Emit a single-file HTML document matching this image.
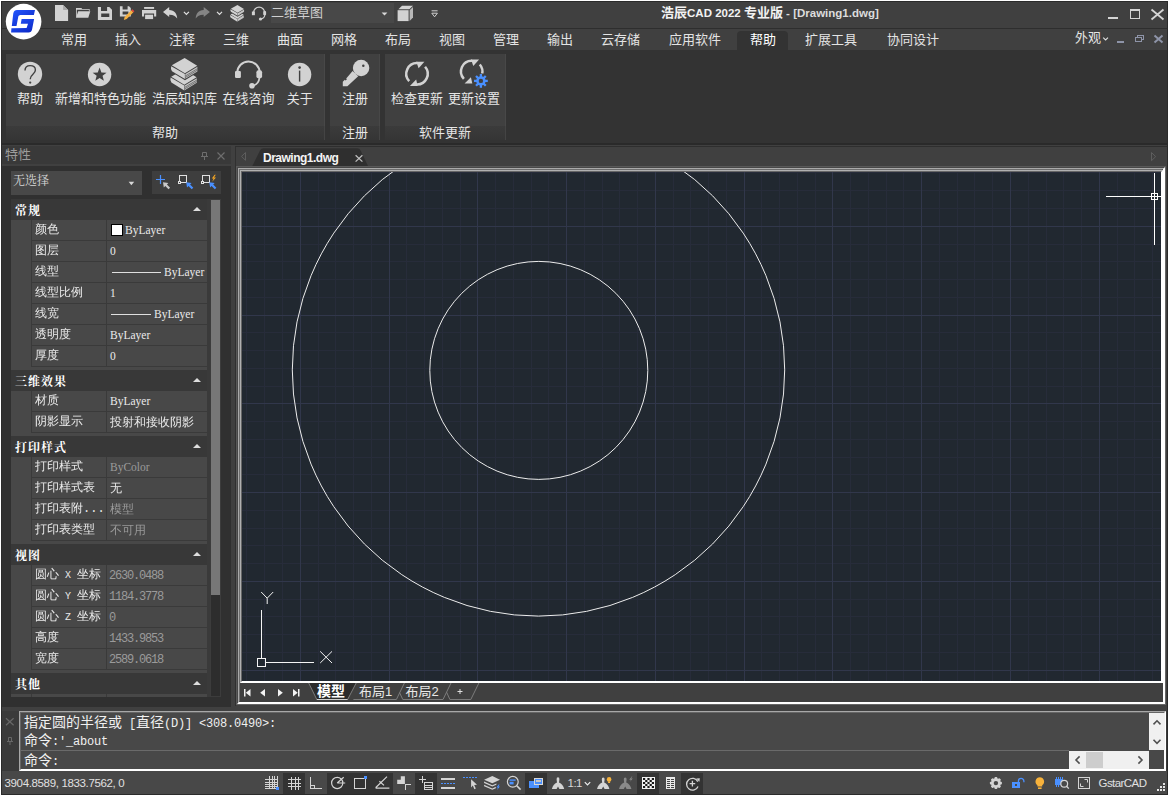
<!DOCTYPE html>
<html lang="zh-CN">
<head>
<meta charset="utf-8">
<title>浩辰CAD 2022 专业版 - [Drawing1.dwg]</title>
<style>
html,body{margin:0;padding:0;background:#fff;}
body{width:1169px;height:796px;overflow:hidden;position:relative;font-family:"Liberation Sans","Noto Sans CJK SC",sans-serif;color:#e6e6e6;font-size:13px;line-height:1;}
div,span,svg{position:absolute;box-sizing:border-box;}
svg{overflow:visible}
.t{white-space:nowrap;}
#win{left:1px;top:1px;width:1167px;height:794px;background:#404040;border:1px solid #2b2b2b;}
/* menu tabs */
.mt{top:30px;height:20px;line-height:20px;font-size:13px;color:#e4e4e4;text-align:center;white-space:nowrap;}
/* ribbon */
.rp{top:54px;height:72px;background:#404040;border-right:1px solid #484848}
.rl{top:126px;height:14px;background:linear-gradient(#3b3b3b,#353535);border-right:1px solid #444}
.rt{font-size:13px;color:#e6e6e6;white-space:nowrap;text-align:center;height:14px;line-height:14px;}
/* property grid */
.pf{font-family:"Liberation Serif","Noto Serif CJK SC",serif;}
.sh{left:11px;width:196px;height:21px;background:#383838;}
.sh b{position:absolute;left:4px;top:4px;letter-spacing:1px;font-size:12px;line-height:13px;color:#fff;font-weight:bold;white-space:nowrap;font-family:"Noto Serif CJK SC",serif;}
.sh i{position:absolute;left:182px;top:8px;width:0;height:0;border-left:4px solid transparent;border-right:4px solid transparent;border-bottom:4px solid #ddd;}
.rw{left:11px;width:196px;height:21px;background:#484848;border-bottom:1px solid #3a3a3a;}
.rw u{position:absolute;left:20px;top:0;width:1px;height:20px;background:#3a3a3a;}
.rw s{position:absolute;left:95px;top:0;width:1px;height:20px;background:#3a3a3a;}
.rw em{position:absolute;left:24px;top:3px;font-style:normal;font-size:12px;line-height:14px;color:#eaeaea;white-space:pre;font-family:"Liberation Mono","WenQuanYi Zen Hei",monospace;letter-spacing:0;}
.rw em b{font-weight:normal;font-size:10px;}
.rw kbd{position:absolute;left:0;top:0;width:20px;height:21px;background:#484848;}
.rw q{position:absolute;left:99px;top:3px;font-size:11.500px;line-height:14px;color:#eaeaea;white-space:nowrap;quotes:none;font-family:"Liberation Serif","WenQuanYi Zen Hei",serif;}
.rw q.g{color:#9a9a9a}
.rw q.c{font-size:12px}
.rw q.m{font-family:"Liberation Mono",monospace;font-size:12px;letter-spacing:-1.2px;color:#9a9a9a;top:4px;left:98px}
.gap{left:11px;width:196px;height:3px;background:#484848;}
.cmd{left:24px;font-family:"Liberation Mono","Noto Sans CJK SC",monospace;font-size:12px;letter-spacing:-0.2px;color:#f0f0f0;white-space:pre;line-height:18px;height:18px;}
.cmd span{position:static;font-size:14px;letter-spacing:0;font-family:"Noto Sans CJK SC",sans-serif;}
.sb{top:773px;height:21px;background:#333;}
</style>
</head>
<body>
<div id="win"></div>
<!-- title bar -->
<div style="left:2px;top:28px;width:1165px;height:1px;background:#2e2e2e"></div>
<div style="left:2px;top:50px;width:1165px;height:93px;background:#333"></div>
<div style="left:2px;top:143px;width:1165px;height:2px;background:#2a2a2a"></div>
<!-- logo -->
<svg style="left:0;top:0" width="48" height="44" viewBox="0 0 48 44">
<defs><linearGradient id="lg" x1="0" y1="0" x2="1" y2="1"><stop offset="0" stop-color="#2458ff"/><stop offset="1" stop-color="#0a24c0"/></linearGradient></defs>
<circle cx="23.6" cy="21.6" r="17.8" fill="#fff"/>
<path d="M13.3 13.3Q14.2 10.1 17 10.1L35 10.1L33.9 14.9L20.4 14.9Q18.6 14.9 18.3 16.6L16.5 25.9L11.8 25.9Z" fill="url(#lg)"/>
<path d="M21.6 19.1L34.1 19.1L32.1 29.3Q31.4 32.6 28.5 32.6L11.1 32.6L11.4 28.2L26.6 27.9L28 23.8L20.8 23.8Z" fill="url(#lg)"/>
</svg>
<!-- quick access icons -->
<svg style="left:0;top:0" width="450" height="28" viewBox="0 0 450 28">
<g fill="#d2d2d2">
<path d="M55 5.1H63.1L68.1 10.1V20.9H55Z"/><path d="M63.1 5.1L68.1 10.1H63.1Z" fill="#a8a8a8"/>
<path d="M76 8H81.4L82.2 9H89.6V11H88.9V9.8H76.8V16.5L76 17.8Z"/><path d="M78.2 11.2H90.3L88.3 17.8H76Z"/>
<path d="M97.9 7H101V11.1H107.1V7H109.3L112 9.7V20.1H97.9ZM101.2 13.5V17H109.3V13.5Z" fill-rule="evenodd"/>
<path d="M119.9 6.2H122.6V9.6H127.6V6.2H129L130.8 8V16.6H119.9ZM122.6 11.6V14.6H128.4V11.6Z" fill-rule="evenodd"/>
<path d="M144.1 7H154.1V8.9H144.1Z"/><path d="M142 10.1H156.2V16.6H154.1V13.6H144.1V16.6H142Z"/><path d="M145.1 14.7H153.1V19.1H145.1Z"/>
<path d="M163 12L169.2 7V9.9C174.5 10.2 177 13.5 177.2 18.6C175.5 15.8 173.2 14.6 169.2 14.7V17Z"/>
<path d="M209.9 12L203.7 7V9.9C198.4 10.2 195.9 13.5 195.7 18.6C197.4 15.8 199.7 14.6 203.7 14.7V17Z" fill="#858585"/>
</g>
<path d="M123.9 19.9L124.6 17L131.3 10.2L133.4 12.2L126.7 19Z" fill="#f5b042"/><path d="M131.3 10.2L132.3 9.2L134.4 11.2L133.4 12.2Z" fill="#e8453c"/>
<path d="M183.9 11.8L186.4 14.4L188.9 11.8" fill="none" stroke="#e0e0e0" stroke-width="1.2"/>
<path d="M217 11.8L219.5 14.4L222 11.8" fill="none" stroke="#e0e0e0" stroke-width="1.2"/>
<!-- books small -->
<g fill="#d2d2d2" transform="translate(142 -25.100) scale(.517)">
<g transform="translate(-.6 11.400)">
<path d="M171.800 65.300L184.600 58L197.200 65.800L184.900 73.300Z"/>
<path d="M171.200 66.200L184.900 74.100V79.100L172 71.200Q170.400 68.600 171.200 66.200Z"/>
<path d="M185.300 74.100L197.400 66.800V71.400L185.300 78.800Z" fill="#c4c4c4"/>
</g>
<path d="M170.400 65.300L184.600 56.600L198.800 65.800V72.400L185 80.800L170.600 72.200Z" fill="#404040"/>
<path d="M171.800 65.300L184.600 58L197.200 65.800L184.900 73.300Z"/>
<path d="M171.200 66.200L184.900 74.100V79.100L172 71.200Q170.400 68.600 171.200 66.200Z"/>
<path d="M185.300 74.100L197.400 66.800V71.400L185.300 78.800Z" fill="#c4c4c4"/>
</g>
<!-- headset small -->
<path d="M253.6 12.6A5.4 5.4 0 0 1 264.6 12.6" fill="none" stroke="#d2d2d2" stroke-width="1.2"/>
<rect x="251.9" y="11.5" width="3" height="3.7" fill="#d2d2d2"/><rect x="263.2" y="11" width="2.9" height="4.2" rx="1" fill="#d2d2d2"/>
<path d="M264.8 15C264.6 17.2 263 18.6 260.8 19" fill="none" stroke="#d2d2d2" stroke-width="1.1"/><circle cx="260.5" cy="19" r="1.6" fill="#d2d2d2"/>
<!-- combo -->
<rect x="271" y="3" width="123" height="20" fill="#484848"/>
<path d="M381.6 12.4H387.4L384.5 15.6Z" fill="#d8d8d8"/>
<!-- cube -->
<g fill="#d2d2d2"><path d="M397.6 10.2H408.6V21.1H397.6Z"/><path d="M398.4 9.2L402 5.8H413L409.4 9.2Z"/><path d="M409.6 10.2L413 7V17.6L409.6 21.1Z" fill="#b8b8b8"/></g>
<path d="M431.6 10.8H437.6" stroke="#cfcfcf" stroke-width="1"/><path d="M431.8 13.2L434.6 16.8L437.4 13.2Z" fill="none" stroke="#cfcfcf" stroke-width="1"/>
</svg>
<span class="t" style="left:271px;top:6px;font-size:13px;line-height:14px;color:#d0d0d0">二维草图</span>
<!-- title -->
<span class="t" id="title" style="left:661px;top:5px;font-size:13px;line-height:16px;font-weight:bold;color:#f2f2f2">浩辰<span style="position:static;font-size:11.500px;letter-spacing:0">CAD 2022 </span>专业版<span style="position:static;font-size:11.500px;letter-spacing:0;font-weight:bold;color:#dcdcdc"> - [Drawing1.dwg]</span></span>
<!-- window buttons -->
<svg style="left:1100px;top:0" width="69" height="52" viewBox="1100 0 69 52">
<rect x="1108" y="17" width="10" height="2" fill="#d4d4d4"/>
<rect x="1130.5" y="10" width="9" height="8.5" fill="none" stroke="#d4d4d4" stroke-width="1"/><rect x="1130" y="9" width="10" height="2" fill="#d4d4d4"/>
<path d="M1151.500 9.500L1163.500 19.500M1163.500 9.500L1151.500 19.500" stroke="#d4d4d4" stroke-width="1.800"/>
<path d="M1103.2 37.6L1105.6 40L1108 37.6" fill="none" stroke="#e0e0e0" stroke-width="1.1"/>
<rect x="1117" y="41" width="7" height="2" fill="#8e94a8"/>
<rect x="1137.5" y="35.5" width="6" height="4" fill="none" stroke="#8e94a8" stroke-width="1"/><rect x="1135.5" y="37.5" width="6" height="4" fill="#404040" stroke="#8e94a8" stroke-width="1"/>
<path d="M1154.5 35.5L1162.5 42.5M1162.5 35.5L1154.5 42.5" stroke="#8e94a8" stroke-width="2"/>
</svg>
<span class="t" style="left:1075px;top:31px;font-size:13px;line-height:14px;color:#e4e4e4">外观</span>
<!-- menu tabs -->
<div style="left:737px;top:31px;width:51px;height:20px;background:#333;border-radius:4px 4px 0 0"></div>
<span class="mt" style="left:47px;width:54px">常用</span>
<span class="mt" style="left:101px;width:54px">插入</span>
<span class="mt" style="left:155px;width:54px">注释</span>
<span class="mt" style="left:209px;width:54px">三维</span>
<span class="mt" style="left:263px;width:54px">曲面</span>
<span class="mt" style="left:317px;width:54px">网格</span>
<span class="mt" style="left:371px;width:54px">布局</span>
<span class="mt" style="left:425px;width:54px">视图</span>
<span class="mt" style="left:479px;width:54px">管理</span>
<span class="mt" style="left:533px;width:54px">输出</span>
<span class="mt" style="left:587px;width:67px">云存储</span>
<span class="mt" style="left:654px;width:82px">应用软件</span>
<span class="mt" style="left:736px;width:54px;color:#fff">帮助</span>
<span class="mt" style="left:790px;width:82px">扩展工具</span>
<span class="mt" style="left:872px;width:82px">协同设计</span>
<!-- ribbon panels -->
<div class="rp" style="left:6px;width:319px"></div><div class="rl" style="left:6px;width:319px"></div>
<div class="rp" style="left:330px;width:50px"></div><div class="rl" style="left:330px;width:50px"></div>
<div class="rp" style="left:385px;width:121px"></div><div class="rl" style="left:385px;width:121px"></div>
<svg style="left:0;top:50px" width="520" height="50" viewBox="0 50 520 50">
<g fill="#d2d2d2">
<circle cx="30" cy="74" r="12.2"/>
<circle cx="99.6" cy="74.5" r="11.7"/>
<circle cx="299.6" cy="74.5" r="11.7"/>
<!-- books -->
<g id="bk" transform="translate(-.6 11.400)">
<path d="M171.800 65.300L184.600 58L197.200 65.800L184.900 73.300Z"/>
<path d="M171.200 66.200L184.900 74.100V79.100L172 71.200Q170.400 68.600 171.200 66.200Z"/>
<path d="M185.300 74.100L197.400 66.800V71.400L185.300 78.800Z" fill="#c4c4c4"/>
</g>
<path d="M170.800 65.300L184.600 57L198.400 65.800V72L185 80.200L171 71.800Z" fill="#404040"/>
<path d="M171.800 65.300L184.600 58L197.200 65.800L184.900 73.300Z"/>
<path d="M171.200 66.200L184.900 74.100V79.100L172 71.200Q170.400 68.600 171.200 66.200Z"/>
<path d="M185.300 74.100L197.400 66.800V71.400L185.300 78.800Z" fill="#c4c4c4"/>
<!-- headset -->
<rect x="235" y="70.9" width="5.9" height="7.1" rx="1.2"/><rect x="256.4" y="70.2" width="5.7" height="8.1" rx="2"/>
<circle cx="252" cy="85.8" r="2.8"/>
<!-- key -->
<circle cx="361.100" cy="68" r="8.200"/>
<path d="M352.600 71L358.200 76.200L347.400 86.200H342.800V81.800L344.800 79.800L345.600 80.600L346.900 79.300L346.200 78.500Z"/>
</g>
<path d="M237.300 72.600A11.200 11.200 0 0 1 259.700 72.600" fill="none" stroke="#d2d2d2" stroke-width="2"/>
<path d="M259.400 78C259 81.600 257 84.400 253.400 85.600" fill="none" stroke="#d2d2d2" stroke-width="1.800"/>
<circle cx="363.300" cy="65.800" r="1.250" fill="#404040"/>
<path d="M185.300 76L197.400 68.700M185.300 77.500L197.400 70.200M184.700 87.400L196.800 80.100M184.700 88.900L196.800 81.600" stroke="#404040" stroke-width=".6" fill="none"/>
<!-- ? -->
<path d="M25 70.600C25 67.200 27.200 65.600 30.200 65.600C33.400 65.600 35.400 67.400 35.400 70C35.400 74.400 30.200 74 30.200 79.200" fill="none" stroke="#404040" stroke-width="1.400"/><circle cx="30.200" cy="82.600" r="1.150" fill="#404040"/>
<!-- star -->
<path d="M99.60 67.60L101.42 72.39L106.54 72.64L102.55 75.86L103.89 80.81L99.60 78.00L95.31 80.81L96.65 75.86L92.66 72.64L97.78 72.39Z" fill="#404040"/>
<!-- i -->
<circle cx="299.6" cy="67.6" r="1.3" fill="#404040"/><rect x="298.9" y="70.6" width="1.4" height="11" fill="#404040"/>
<!-- refresh 1 -->
<g fill="none" stroke="#d2d2d2" stroke-width="2.500">
<path d="M409.17 81.10A10.7 10.7 0 0 1 417.37 63.11"/><path d="M425.08 66.78A10.7 10.7 0 0 1 416.63 84.49"/>
<path d="M463.87 78.80A10.7 10.7 0 0 1 472.07 60.81"/><path d="M479.78 64.48A10.7 10.7 0 0 1 481.88 74.81"/>
</g>
<g fill="#d2d2d2"><path d="M416.30 61.80L424.40 61.80L418.60 68.30Z"/><path d="M409.90 85.90L417.60 85.90L416.20 79.50Z"/><path d="M471.00 59.50L479.10 59.50L473.30 66.00Z"/><path d="M464.60 83.60L472.30 83.60L470.90 77.20Z"/></g>
<!-- gear -->
<circle cx="480.900" cy="80.900" r="7.600" fill="#404040"/>
<g transform="translate(480.900 80.900)" fill="#4a90ff"><circle r="4.700"/>
<rect x="-1.150" y="-6.900" width="2.300" height="13.800" transform="rotate(0)"/><rect x="-1.150" y="-6.900" width="2.300" height="13.800" transform="rotate(45)"/><rect x="-1.150" y="-6.900" width="2.300" height="13.800" transform="rotate(90)"/><rect x="-1.150" y="-6.900" width="2.300" height="13.800" transform="rotate(135)"/>
<circle r="2.200" fill="#404040"/></g>
</svg>
<span class="rt" style="left:0;width:60px;top:92px">帮助</span>
<span class="rt" style="left:50.5px;width:100px;top:92px">新增和特色功能</span>
<span class="rt" style="left:134.4px;width:100px;top:92px">浩辰知识库</span>
<span class="rt" style="left:198.5px;width:100px;top:92px">在线咨询</span>
<span class="rt" style="left:269.7px;width:60px;top:92px">关于</span>
<span class="rt" style="left:325px;width:60px;top:92px">注册</span>
<span class="rt" style="left:367px;width:100px;top:92px">检查更新</span>
<span class="rt" style="left:424px;width:100px;top:92px">更新设置</span>
<span class="rt" style="left:135px;width:60px;top:126px">帮助</span>
<span class="rt" style="left:325px;width:60px;top:126px">注册</span>
<span class="rt" style="left:395px;width:100px;top:126px">软件更新</span>
<!-- left properties panel -->
<div style="left:2px;top:166px;width:229px;height:541px;background:#303030"></div>
<div style="left:2px;top:146px;width:229px;height:18px;background:#393939"></div>
<div style="left:235px;top:146px;width:1px;height:560px;background:#303030"></div>
<div style="left:235px;top:146px;width:932px;height:1px;background:#2e2e2e"></div>
<span class="t" style="left:5px;top:148px;font-size:13px;line-height:14px;color:#9c9c9c">特性</span>
<svg style="left:195px;top:148px" width="36" height="16" viewBox="195 148 36 16">
<g fill="none" stroke="#6e6e6e" stroke-width="1"><path d="M202.5 152.5H206.5V156.5H202.5ZM201 156.5H208M204.5 156.5V160"/><path d="M217.5 152.5L224.5 159.5M224.5 152.5L217.5 159.5" stroke-width="1.2"/></g>
</svg>
<div style="left:11px;top:171px;width:131px;height:24px;background:#484848"></div>
<span class="t pf" style="left:13px;top:173px;font-size:12px;line-height:14px;color:#d8d8d8;font-family:'Noto Serif CJK SC',serif">无选择</span>
<svg style="left:126px;top:178px" width="12" height="10" viewBox="126 178 12 10"><path d="M128.6 181.8H134.2L131.4 185.2Z" fill="#d8d8d8"/></svg>
<div style="left:152px;top:171px;width:69px;height:23px;background:#3e3e3e"></div>
<svg style="left:152px;top:171px" width="69" height="23" viewBox="152 171 69 23">
<path d="M156 179.500H165M160.500 175V184" stroke="#4a90ff" stroke-width="1.200" fill="none"/>
<path d="M163.0 182.2L168.4 183.0L166.9 184.5L170.1 187.7L168.5 189.3L165.3 186.1L163.8 187.6Z" fill="#c8c8c8"/>
<g fill="none" stroke="#e0e0e0" stroke-width="1"><rect x="179.500" y="175.500" width="7" height="7"/><rect x="202.500" y="175.500" width="7" height="7"/></g>
<g fill="#3e3e3e" stroke="#e0e0e0" stroke-width="1"><rect x="178.500" y="181.500" width="2" height="2"/><rect x="201.500" y="181.500" width="2" height="2"/></g>
<path d="M186.2 182.2L191.6 183.0L190.1 184.5L193.3 187.7L191.7 189.3L188.5 186.1L187.0 187.6Z" fill="#4a90ff"/><path d="M209.3 182.2L214.7 183.0L213.2 184.5L216.4 187.7L214.8 189.3L211.6 186.1L210.1 187.6Z" fill="#4a90ff"/>
<path d="M214.600 174.800L211.800 178.600H213.600L212.200 181.800L216 177.400H214L215.800 174.800Z" fill="#f5a623"/>
</svg>
<!-- grid scrollbar -->
<div style="left:207px;top:199px;width:3px;height:498px;background:#3a3a3a"></div>
<div style="left:210px;top:199px;width:11px;height:498px;background:#2d2d2d;border:1px solid #3c3c3c"></div>
<div style="left:211px;top:200px;width:9px;height:395px;background:#777"></div>
<div class="sh" style="top:199px"><b>常规</b><i></i></div>
<div class="rw" style="top:220px"><kbd></kbd><u></u><s></s><em>颜色</em><span style="left:100px;top:4px;width:12px;height:12px;background:#fff;border:1px solid #000"></span><q><span style="position:static;display:inline-block;width:15px"></span>ByLayer</q></div>
<div class="rw" style="top:241px"><kbd></kbd><u></u><s></s><em>图层</em><q>0</q></div>
<div class="rw" style="top:262px"><kbd></kbd><u></u><s></s><em>线型</em><span style="left:101px;top:10px;width:49px;height:1px;background:#e0e0e0"></span><q><span style="position:static;display:inline-block;width:54px"></span>ByLayer</q></div>
<div class="rw" style="top:283px"><kbd></kbd><u></u><s></s><em>线型比例</em><q>1</q></div>
<div class="rw" style="top:304px"><kbd></kbd><u></u><s></s><em>线宽</em><span style="left:100px;top:10px;width:40px;height:1px;background:#e0e0e0"></span><q><span style="position:static;display:inline-block;width:44px"></span>ByLayer</q></div>
<div class="rw" style="top:325px"><kbd></kbd><u></u><s></s><em>透明度</em><q>ByLayer</q></div>
<div class="rw" style="top:346px"><kbd></kbd><u></u><s></s><em>厚度</em><q>0</q></div>
<div class="gap" style="top:367px"></div>
<div class="sh" style="top:370px"><b>三维效果</b><i></i></div>
<div class="rw" style="top:391px"><kbd></kbd><u></u><s></s><em>材质</em><q>ByLayer</q></div>
<div class="rw" style="top:412px"><kbd></kbd><u></u><s></s><em>阴影显示</em><q class="c">投射和接收阴影</q></div>
<div class="gap" style="top:433px"></div>
<div class="sh" style="top:436px"><b>打印样式</b><i></i></div>
<div class="rw" style="top:457px"><kbd></kbd><u></u><s></s><em>打印样式</em><q class="g">ByColor</q></div>
<div class="rw" style="top:478px"><kbd></kbd><u></u><s></s><em>打印样式表</em><q class="c">无</q></div>
<div class="rw" style="top:499px"><kbd></kbd><u></u><s></s><em>打印表附...</em><q class="g c">模型</q></div>
<div class="rw" style="top:520px"><kbd></kbd><u></u><s></s><em>打印表类型</em><q class="g c">不可用</q></div>
<div class="gap" style="top:541px"></div>
<div class="sh" style="top:544px"><b>视图</b><i></i></div>
<div class="rw" style="top:565px"><kbd></kbd><u></u><s></s><em>圆心<b> X </b>坐标</em><q class="m">2630.0488</q></div>
<div class="rw" style="top:586px"><kbd></kbd><u></u><s></s><em>圆心<b> Y </b>坐标</em><q class="m">1184.3778</q></div>
<div class="rw" style="top:607px"><kbd></kbd><u></u><s></s><em>圆心<b> Z </b>坐标</em><q class="m">0</q></div>
<div class="rw" style="top:628px"><kbd></kbd><u></u><s></s><em>高度</em><q class="m">1433.9853</q></div>
<div class="rw" style="top:649px"><kbd></kbd><u></u><s></s><em>宽度</em><q class="m">2589.0618</q></div>
<div class="gap" style="top:670px"></div>
<div class="sh" style="top:673px"><b>其他</b><i></i></div>
<div class="rw" style="top:694px;height:3px;border:0"><u style="height:3px"></u><s style="height:3px"></s></div>
<!-- document area -->

<svg style="left:236px;top:146px" width="931" height="20" viewBox="236 146 931 20">
<path d="M252.300 166L260 150.500Q261 148.300 263.500 148.300H357.200Q359.600 148.300 360.600 150.500L368 166Z" fill="#2f2f2f"/>
<path d="M245.500 152.500L241.500 156.400L245.500 160.300Z" fill="none" stroke="#5e5e5e" stroke-width="1"/>
<path d="M1151.500 152.500L1155.700 156.600L1151.500 160.700Z" fill="none" stroke="#5e5e5e" stroke-width="1"/>
<path d="M355.600 155.200L362.400 161.600M362.400 155.200L355.600 161.600" stroke="#bdbdbd" stroke-width="1.300" fill="none"/>
</svg>
<span class="t" style="left:263px;top:151px;font-size:12px;line-height:14px;font-weight:bold;letter-spacing:-0.5px;color:#f4f4f4">Drawing1.dwg</span>
<div style="left:236px;top:166px;width:930px;height:539px;border-style:solid;border-width:1px;border-color:#595959 #666 #666 #595959;"></div>
<div style="left:237px;top:167px;width:928px;height:537px;border-style:solid;border-width:1px;border-color:#484848 #fff #fff #484848;"></div>
<div style="left:238px;top:168px;width:926px;height:535px;border-style:solid;border-width:1px;border-color:#aaa #fff #fff #aaa;background:#404040;"></div>
<div style="left:239px;top:169px;width:924px;height:533px;border-style:solid;border-width:1px;border-color:#6e6e6e transparent transparent #6e6e6e;"></div>
<div style="left:240px;top:170px;width:923px;height:513px;border-style:solid;border-width:1px;border-color:#b0b0b0 #fff #fff #b0b0b0;"></div>
<div style="left:241px;top:171px;width:921px;height:511px;border-style:solid;border-width:1px;border-color:#666 #fff #fff #666;"></div>
<svg style="left:242px;top:172px;overflow:hidden" width="919" height="509" viewBox="242 172 919 509">
<rect x="242" y="172" width="919" height="509" fill="#212830"/>
<path d="M246.5 172V681M264.5 172V681M282.5 172V681M318.5 172V681M335.5 172V681M353.5 172V681M371.5 172V681M406.5 172V681M424.5 172V681M442.5 172V681M460.5 172V681M495.5 172V681M513.5 172V681M531.5 172V681M548.5 172V681M584.5 172V681M602.5 172V681M619.5 172V681M637.5 172V681M673.5 172V681M690.5 172V681M708.5 172V681M726.5 172V681M761.5 172V681M779.5 172V681M797.5 172V681M815.5 172V681M850.5 172V681M868.5 172V681M886.5 172V681M903.5 172V681M939.5 172V681M957.5 172V681M974.5 172V681M992.5 172V681M1028.5 172V681M1046.5 172V681M1063.5 172V681M1081.5 172V681M1117.5 172V681M1134.5 172V681M1152.5 172V681M242 172.5H1161M242 190.5H1161M242 208.5H1161M242 244.5H1161M242 261.5H1161M242 279.5H1161M242 297.5H1161M242 332.5H1161M242 350.5H1161M242 368.5H1161M242 386.5H1161M242 421.5H1161M242 439.5H1161M242 457.5H1161M242 474.5H1161M242 510.5H1161M242 528.5H1161M242 545.5H1161M242 563.5H1161M242 599.5H1161M242 616.5H1161M242 634.5H1161M242 652.5H1161" stroke="#272c3a" stroke-width="1" fill="none" shape-rendering="crispEdges"/>
<path d="M300.5 172V681M389.5 172V681M477.5 172V681M566.5 172V681M655.5 172V681M744.5 172V681M832.5 172V681M921.5 172V681M1010.5 172V681M1099.5 172V681M242 226.5H1161M242 315.5H1161M242 403.5H1161M242 492.5H1161M242 581.5H1161M242 670.5H1161" stroke="#31374b" stroke-width="1" fill="none" shape-rendering="crispEdges"/>
<circle cx="538.500" cy="369.900" r="246.200" fill="none" stroke="#ececec" stroke-width="1"/>
<circle cx="538.800" cy="370.400" r="109" fill="none" stroke="#ececec" stroke-width="1"/>
<g fill="none" stroke="#f4f4f4" stroke-width="1" shape-rendering="crispEdges"><rect x="257.500" y="658.500" width="8" height="8"/><path d="M261.500 610V658M266 662.500H314"/></g>
<g fill="none" stroke="#f4f4f4" stroke-width="1"><path d="M261.200 592L267.200 598.200L273.200 592M267.200 598.200V604"/><path d="M320.200 651.400L332 663M332 651.400L320.200 663"/></g>
<g fill="none" stroke="#fff" stroke-width="1" shape-rendering="crispEdges"><path d="M1154.500 173V245M1106 196.500H1161"/><rect x="1151.500" y="193.500" width="6" height="6" stroke="#fff"/></g>
</svg>
<svg style="left:242px;top:683px" width="921" height="19" viewBox="242 683 921 19">
<g fill="#f4f4f4"><path d="M244 689H245.500V696.500H244ZM250.500 689V696.500L245.800 692.750Z"/><path d="M265 689V696.500L260.200 692.750Z"/><path d="M278 689V696.500L282.800 692.750Z"/><path d="M293 689V696.500L297.700 692.750ZM298 689H299.500V696.500H298Z"/></g>
<path d="M308.700 683L316.800 699.500H347.600L356.200 683Z" fill="#2b2b2b"/>
<g fill="none" stroke="#7c7c7c" stroke-width="1"><path d="M353.400 699.500H396.400L404.400 683"/><path d="M399.600 692.700L402.800 699.500H443L451 683"/><path d="M446.600 692.200L449.900 699.500H470.800L478.900 683"/><path d="M308.700 683L316.800 699.500M347.600 699.500L356.200 683"/></g>
<path d="M316.800 699.500H347.600" stroke="#d0d0d0" stroke-width="1"/>
<path d="M457.500 691.500H462.500M460 689V694" stroke="#e0e0e0" stroke-width="1"/>
</svg>
<span class="t" style="left:317px;top:683px;font-size:14px;line-height:16px;font-weight:bold;color:#fff">模型</span>
<span class="t" style="left:359px;top:684px;font-size:13px;line-height:15px;color:#e8e8e8">布局1</span>
<span class="t" style="left:405.500px;top:684px;font-size:13px;line-height:15px;color:#e8e8e8">布局2</span>
<!-- command line -->
<div style="left:2px;top:711px;width:1165px;height:60px;background:#3a3a3a"></div>
<div style="left:19px;top:711px;width:1147px;height:60px;background:#484848;border:1px solid;border-color:#a8a8a8 #fff #fff #a8a8a8"></div>
<div style="left:20px;top:712px;width:1145px;height:58px;border:1px solid;border-color:#666 #fff #fff #666"></div>
<div style="left:21px;top:750px;width:1048px;height:1px;background:#6a6a6a"></div>
<div style="left:1149px;top:713px;width:16px;height:37px;background:#f0f0f0"></div>
<div style="left:1069px;top:751px;width:80px;height:18px;background:#f0f0f0"></div>
<div style="left:1086px;top:752px;width:17px;height:16px;background:#cdcdcd"></div>
<svg style="left:0;top:711px" width="1169" height="60" viewBox="0 711 1169 60">
<g fill="none" stroke="#686868" stroke-width="1.200"><path d="M6 718.200L13.600 725.200M13.600 718.200L6 725.200"/><path d="M8.500 737.500H11.500V741.500H8.500ZM7 741.500H13M10 741.500V745" stroke-width="1"/></g>
<g fill="none" stroke="#505050" stroke-width="1.600"><path d="M1153.500 724.400L1157 720.800L1160.500 724.400"/><path d="M1153.500 739.800L1157 743.400L1160.500 739.800"/><path d="M1079.600 756.400L1076 760L1079.600 763.600"/><path d="M1138.400 756.400L1142 760L1138.400 763.600"/></g>
</svg>
<span class="cmd" style="top:712px"><span>指定圆的半径或</span> [<span>直径</span>(D)] &lt;308.0490&gt;:</span>
<span class="cmd" style="top:730px"><span>命令</span>:'_about</span>
<span class="cmd" style="top:750px"><span>命令</span>:</span>
<!-- status bar -->
<div style="left:2px;top:771px;width:1165px;height:23px;background:#484848"></div>
<span class="t" style="left:4.500px;top:776px;font-size:11.500px;line-height:14px;color:#e0e0e0;letter-spacing:-0.350px">3904.8589, 1833.7562, 0</span>
<div class="sb" style="left:283px;width:22px"></div>
<div class="sb" style="left:327px;width:66px"></div>
<div class="sb" style="left:415px;width:22px"></div>
<div class="sb" style="left:525px;width:22px"></div>
<div class="sb" style="left:637px;width:22px"></div>
<div class="sb" style="left:681px;width:22px"></div>
<svg style="left:0;top:771px" width="1169" height="23" viewBox="0 771 1169 23">
<g fill="none" stroke="#d4d4d4" stroke-width="1" shape-rendering="crispEdges">
<path d="M265 779.500H278M265 782.500H278M265 784.500H278M265 786.500H278M265 788.500H278M269.500 776V789M272.500 776V789M274.500 776V789M277.500 776V789"/>
<path d="M288 779.500H301M288 783.500H301M288 786.500H301M291.500 777V790M295.500 777V790M298.500 777V790" stroke-width="1"/>
<path d="M310.500 777V789M310 788.500H322M311 785.500H314.500V788"/>
<rect x="354.500" y="778.500" width="11" height="10"/>
<path d="M405 784.500H411M405.500 784V790"/>
<path d="M419 779.500H426M422.500 776V783"/><rect x="424.500" y="782.500" width="8" height="7"/><path d="M425 785.500H432M425 787.500H432"/>
<path d="M441 779H455M441 788H455" stroke-width="2"/>
</g>
<g fill="none" stroke="#d4d4d4" stroke-width="1.200">
<circle cx="337.200" cy="783" r="5.600"/><path d="M337.200 783L343.700 777.200M337.200 783H345.200"/>
<path d="M375.600 788.200H389.400M375.600 787.800L387 776.600M379.400 781.200L384 785.400"/>
<circle cx="512.800" cy="781.800" r="5.400"/><path d="M516.800 785.800L520.600 789.600" stroke-width="1.600"/>
<path d="M697.800 781.600A5.900 5.900 0 1 0 698 786.400" stroke-width="1.300"/><path d="M689.600 783.600H695.200M692.400 780.800V786.400" stroke-width="1.300"/>
<path d="M584.800 782.200L587.500 785L590.200 782.200" stroke="#eee" stroke-width="1.200"/>
<rect x="1078.500" y="777.500" width="11" height="11" stroke-width="1"/><path d="M1084.500 779.500H1087.500V782.500M1083.500 786.500H1080.500V783.500" stroke-width="1"/>
</g>
<g fill="#d4d4d4">
<path d="M397.200 779.800H400.800V776.200H404.900V783.900H397.200Z"/>
<path d="M471.100 779.200L477 784.800L474.200 785L475.800 788.600L474.400 789.200L472.800 785.600L471.100 787.400Z"/>
<path d="M484.100 779.800L492.300 776L500 779.800L492.300 783.300Z"/><path d="M484.100 781.600L492.300 785.200L496.400 783.400V784.800L492.300 786.600L484.100 783Z"/><path d="M484.100 784.800L492.300 788.400L495.800 786.800V788.200L492.300 789.800L484.100 786.200Z"/>
<path d="M558 777.200Q559.600 777.200 559.400 779.600L559 782.400Q563 784 564.200 789H559.400L558 786.400L556.600 789H551.900Q553 784 557 782.400L556.600 779.600Q556.400 777.200 558 777.200Z"/>
<path d="M603.200 777.400Q604.800 777.400 604.600 779.800L604.200 782.600Q608.200 784.200 609.400 789H604.600L603.200 786.400L601.800 789H597Q598.200 784.200 602.200 782.600L601.800 779.800Q601.600 777.400 603.200 777.400Z"/>
<path d="M625.200 777.400Q626.800 777.400 626.600 779.800L626.200 782.600Q630.200 784.200 631.400 789H626.600L625.200 786.400L623.800 789H619Q620.200 784.200 624.200 782.600L623.800 779.800Q623.600 777.400 625.200 777.400Z" fill="#8a8a8a"/>
<path d="M631.800 776.400L629.200 779.800H631L629.800 782L632.800 778.600H631L632.400 776.400Z" fill="#8a8a8a"/>
<path d="M696.200 778.600L699.800 778.200L699.400 781.800Z"/>
<rect x="642" y="777" width="13" height="12" fill="#f2f2f2"/><rect x="666" y="777" width="9" height="12" fill="#e8e8e8"/>
</g>
<g fill="#1a1a1a">
<rect x="643" y="778" width="2.200" height="2"/><rect x="647.400" y="778" width="2.200" height="2"/><rect x="651.800" y="778" width="2.200" height="2"/>
<rect x="645.200" y="780" width="2.200" height="2"/><rect x="649.600" y="780" width="2.200" height="2"/>
<rect x="643" y="782" width="2.200" height="2"/><rect x="647.400" y="782" width="2.200" height="2"/><rect x="651.800" y="782" width="2.200" height="2"/>
<rect x="645.200" y="784" width="2.200" height="2"/><rect x="649.600" y="784" width="2.200" height="2"/>
<rect x="643" y="786" width="2.200" height="2"/><rect x="647.400" y="786" width="2.200" height="2"/><rect x="651.800" y="786" width="2.200" height="2"/>
</g>
<path d="M667 779.500H670M671 779.500H674M667 781.500H670M671 781.500H674M667 783.500H670M671 783.500H674M667 785.500H670M671 785.500H674M667 787.500H670M671 787.500H674" stroke="#444" stroke-width="1" shape-rendering="crispEdges"/>
<g fill="#4a90ff">
<rect x="276" y="787" width="3" height="3"/><rect x="364" y="776" width="3" height="3"/>
<path d="M498.600 784.400L496.400 787.400H498L497 790L500 786.600H498.400L499.600 784.400Z"/>
<rect x="529" y="781" width="10" height="7"/>
<rect x="509.600" y="779.400" width="6" height="1.400"/><rect x="509.600" y="781.800" width="4" height="2.600"/>
<path d="M1012 782H1020V788H1012Z"/>
<rect x="1055" y="779" width="8" height="6"/>
</g>
<path d="M463 777.500H477M441 783.500H455" stroke="#4a90ff" stroke-width="1" stroke-dasharray="2 1" shape-rendering="crispEdges"/>
<rect x="534.500" y="778.500" width="8" height="6" fill="#4a90ff" stroke="#d8d8d8" stroke-width="1"/><rect x="536" y="780" width="5" height="2" fill="#c8c8c8"/>
<path d="M1018.400 782V781.200A2.750 2.750 0 0 1 1023.900 781.200V782.200" fill="none" stroke="#4a90ff" stroke-width="1.300"/><rect x="1015" y="784" width="2" height="2" fill="#484848"/>
<circle cx="609.100" cy="779.400" r="2.300" fill="#f7b23b"/><rect x="608.100" y="781.400" width="2" height="1.600" fill="#f7b23b"/>
<path d="M1039.800 777.200A4.400 4.400 0 0 1 1042.200 785.200V786.600H1037.400V785.200A4.400 4.400 0 0 1 1039.800 777.200Z" fill="#f7b23b"/><rect x="1038" y="787.400" width="3.600" height="1.600" fill="#f7b23b"/>
<g transform="translate(995.900 783.100)" fill="#d4d4d4"><circle r="4.900"/><rect x="-1.400" y="-6" width="2.800" height="12" rx="0.800" transform="rotate(0)"/><rect x="-1.400" y="-6" width="2.800" height="12" rx="0.800" transform="rotate(45)"/><rect x="-1.400" y="-6" width="2.800" height="12" rx="0.800" transform="rotate(90)"/><rect x="-1.400" y="-6" width="2.800" height="12" rx="0.800" transform="rotate(135)"/><circle r="2.200" fill="#484848"/></g>
<path d="M1056.500 777V779M1058.500 777V779M1060.500 777V779M1062.500 777V779M1056.500 785V787M1058.500 785V787" stroke="#4a90ff" stroke-width="1"/>
<circle cx="1064.200" cy="783.700" r="3.400" fill="#484848" stroke="#d4d4d4" stroke-width="1.200"/><path d="M1066.600 786.200L1068.800 788.600" stroke="#d4d4d4" stroke-width="1.300"/>
<g fill="#e4e4e4"><rect x="1163" y="783" width="2" height="2"/><rect x="1160" y="786" width="2" height="2"/><rect x="1163" y="786" width="2" height="2"/><rect x="1157" y="789" width="2" height="2"/><rect x="1160" y="789" width="2" height="2"/><rect x="1163" y="789" width="2" height="2"/></g>
</svg>
<span class="t" style="left:567.500px;top:776px;font-size:11.500px;line-height:14px;color:#d8d8d8;letter-spacing:-0.500px">1:1</span>
<span class="t" style="left:1098.500px;top:776px;font-size:11.500px;line-height:14px;color:#e0e0e0;letter-spacing:-0.550px">GstarCAD</span>
</body>
</html>
